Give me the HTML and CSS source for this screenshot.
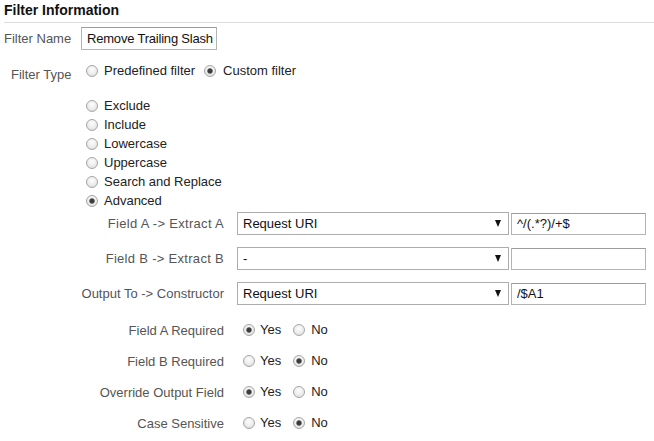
FILE: index.html
```html
<!DOCTYPE html>
<html>
<head>
<meta charset="utf-8">
<title>Filter Information</title>
<link rel="stylesheet" href="styles.css">
</head>
<body>
<div class="section">
  <h2 class="title">Filter Information</h2>

  <div class="row-name">
    <label class="lbl-left">Filter Name</label>
    <input class="txt name-input" type="text" value="Remove Trailing Slash">
  </div>

  <div class="row-type">
    <label class="lbl-left lbl-type">Filter Type</label>
    <div class="opts">
      <label class="opt"><input type="radio" name="ftype"><span>Predefined filter</span></label>
      <label class="opt opt-gap"><input type="radio" name="ftype" checked><span>Custom filter</span></label>
    </div>
  </div>

  <div class="type-list">
    <label class="opt"><input type="radio" name="custom"><span>Exclude</span></label>
    <label class="opt"><input type="radio" name="custom"><span>Include</span></label>
    <label class="opt"><input type="radio" name="custom"><span>Lowercase</span></label>
    <label class="opt"><input type="radio" name="custom"><span>Uppercase</span></label>
    <label class="opt"><input type="radio" name="custom"><span>Search and Replace</span></label>
    <label class="opt"><input type="radio" name="custom" checked><span>Advanced</span></label>
  </div>

  <div class="adv-fields">
    <div class="adv-row">
      <span class="lbl-right lbl-wide">Field A -&gt; Extract A</span>
      <div class="select"><span>Request URI</span><span class="arrow"></span></div>
      <input class="txt pattern" type="text" value="^/(.*?)/+$">
    </div>
    <div class="adv-row">
      <span class="lbl-right lbl-wide">Field B -&gt; Extract B</span>
      <div class="select"><span>-</span><span class="arrow"></span></div>
      <input class="txt pattern" type="text" value="">
    </div>
    <div class="adv-row">
      <span class="lbl-right">Output To -&gt; Constructor</span>
      <div class="select"><span>Request URI</span><span class="arrow"></span></div>
      <input class="txt pattern" type="text" value="/$A1">
    </div>
  </div>

  <div class="yn-fields">
    <div class="yn-row">
      <span class="lbl-right">Field A Required</span>
      <label class="opt"><input type="radio" name="areq" checked><span>Yes</span></label>
      <label class="opt opt-no"><input type="radio" name="areq"><span>No</span></label>
    </div>
    <div class="yn-row">
      <span class="lbl-right">Field B Required</span>
      <label class="opt"><input type="radio" name="breq"><span>Yes</span></label>
      <label class="opt opt-no"><input type="radio" name="breq" checked><span>No</span></label>
    </div>
    <div class="yn-row">
      <span class="lbl-right">Override Output Field</span>
      <label class="opt"><input type="radio" name="ovr" checked><span>Yes</span></label>
      <label class="opt opt-no"><input type="radio" name="ovr"><span>No</span></label>
    </div>
    <div class="yn-row">
      <span class="lbl-right">Case Sensitive</span>
      <label class="opt"><input type="radio" name="cs"><span>Yes</span></label>
      <label class="opt opt-no"><input type="radio" name="cs" checked><span>No</span></label>
    </div>
  </div>
</div>
</body>
</html>
```

FILE: styles.css
```css
html, body {
  margin: 0;
  padding: 0;
  background: #ffffff;
}

body {
  font-family: "Liberation Sans", Arial, sans-serif;
  font-size: 13px;
  color: #222222;
}

.section {
  padding-left: 4px;
}

.title {
  margin: 0;
  padding: 1px 0 3px 0;
  font-size: 14px;
  line-height: 18px;
  font-weight: bold;
  color: #111111;
  border-bottom: 1px solid #dddddd;
}

/* Filter name row */
.row-name {
  display: flex;
  align-items: center;
  margin-top: 4px;
  height: 23px;
}

.lbl-left {
  width: 77px;
  flex: none;
  color: #555555;
}

.txt {
  box-sizing: border-box;
  height: 23px;
  margin: 0;
  padding: 0 5px;
  font-family: "Liberation Sans", Arial, sans-serif;
  font-size: 13px;
  color: #111111;
  background: #ffffff;
  border: 1px solid #b4b4b4;
  border-top-color: #9c9c9c;
  border-radius: 0;
  outline: none;
}

.name-input {
  width: 136px;
  padding: 0 1px 0 5px;
  letter-spacing: -0.2px;
}

/* Filter type row */
.row-type {
  display: flex;
  align-items: flex-start;
  margin-top: 11px;
}

.lbl-type {
  box-sizing: border-box;
  padding-left: 7px;
  line-height: 19px;
  margin-top: 4px;
}

.opts {
  display: flex;
}

.opt {
  display: flex;
  align-items: center;
  height: 19px;
  line-height: 19px;
  color: #222222;
}

.opt input[type="radio"] {
  -webkit-appearance: none;
  appearance: none;
  box-sizing: border-box;
  width: 12px;
  height: 12px;
  margin: 0 6px 0 5px;
  border-radius: 50%;
  border: 1px solid #a6a6a6;
  background: radial-gradient(circle at 50% 35%, #fdfdfd 0%, #ececec 55%, #d6d6d6 100%);
  flex: none;
}

.opt input[type="radio"]:checked {
  background:
    radial-gradient(circle at 50% 50%, #3c3c3c 0 2px, #8a8a8a 2.6px, rgba(255,255,255,0) 3.2px),
    radial-gradient(circle at 50% 35%, #fdfdfd 0%, #ececec 55%, #d6d6d6 100%);
}

.opt-gap input[type="radio"] {
  margin-left: 9px;
  margin-right: 7px;
}

/* Custom filter type list */
.type-list {
  display: flex;
  flex-direction: column;
  margin-top: 12px;
  padding-left: 77px;
}

/* Advanced fields */
.adv-fields {
  display: flex;
  flex-direction: column;
  gap: 12px;
  margin-top: 2px;
}

.adv-row {
  display: flex;
  align-items: center;
  height: 23px;
}

.lbl-right {
  box-sizing: border-box;
  width: 233px;
  flex: none;
  padding-right: 13px;
  text-align: right;
  color: #555555;
}

.lbl-wide {
  letter-spacing: 0.3px;
}

.select {
  box-sizing: border-box;
  display: flex;
  align-items: center;
  width: 272px;
  height: 23px;
  padding: 0 7px 0 5px;
  border: 1px solid #adadad;
  background: #ffffff;
  color: #111111;
}

.select .arrow {
  margin-left: auto;
  width: 0;
  height: 0;
  border-left: 3.5px solid transparent;
  border-right: 3.5px solid transparent;
  border-top: 7px solid #111111;
}

.pattern {
  width: 135px;
  margin-left: 2px;
  height: 22px;
}

/* Yes / No fields */
.yn-fields {
  display: flex;
  flex-direction: column;
  gap: 12px;
  margin-top: 15px;
}

.yn-row {
  display: flex;
  align-items: center;
  height: 19px;
}

.yn-row .lbl-right {
  padding-top: 2px;
}

.yn-row .opt input[type="radio"] {
  margin-left: 6px;
  margin-right: 5px;
}

.yn-row .opt-no input[type="radio"] {
  margin-left: 12px;
  margin-right: 6px;
}
```
